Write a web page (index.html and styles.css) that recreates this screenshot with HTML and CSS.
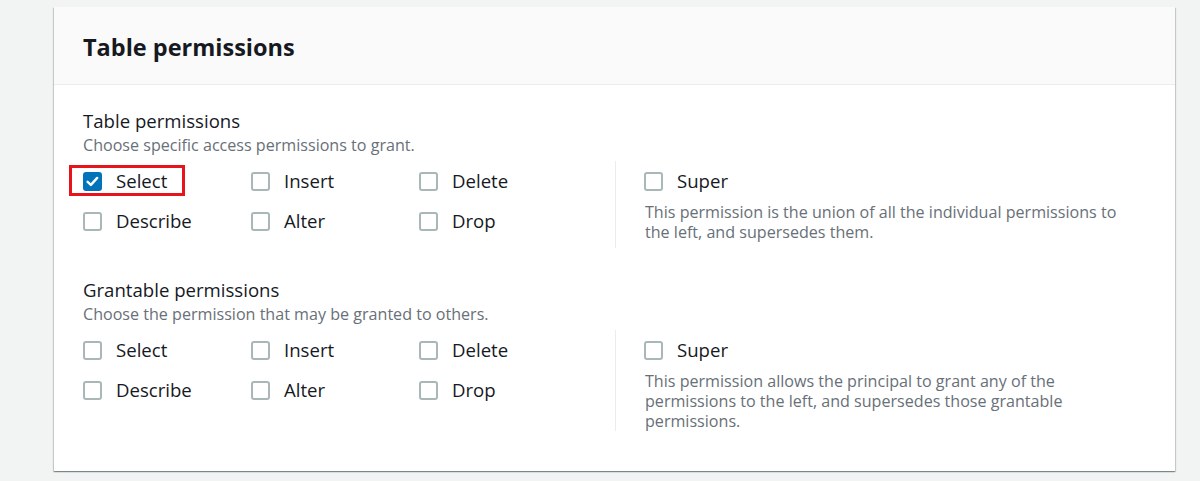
FILE: index.html
```html
<!DOCTYPE html>
<html>
<head>
<meta charset="utf-8">
<link rel="stylesheet" href="styles.css">
</head>
<body>
<div class="page">
  <div class="card">
    <div class="card-header"><h2 class="card-title">Table permissions</h2></div>
    <div class="card-body">
      <div class="section">
        <div class="section-title">Table permissions</div>
        <div class="section-desc">Choose specific access permissions to grant.</div>
        <div class="perm-row">
          <div class="perm-grid">
            <label class="cb-item highlight"><span class="cb checked"><svg viewBox="0 0 19 19" width="19" height="19"><path d="M4.6 9.8 L7.9 12.9 L14.2 5.9" fill="none" stroke="#fff" stroke-width="2.4" stroke-linecap="round" stroke-linejoin="round"/></svg></span><span class="cb-label">Select</span></label>
            <label class="cb-item"><span class="cb"></span><span class="cb-label">Insert</span></label>
            <label class="cb-item"><span class="cb"></span><span class="cb-label">Delete</span></label>
            <label class="cb-item"><span class="cb"></span><span class="cb-label">Describe</span></label>
            <label class="cb-item"><span class="cb"></span><span class="cb-label">Alter</span></label>
            <label class="cb-item"><span class="cb"></span><span class="cb-label">Drop</span></label>
          </div>
          <div class="super-col">
            <label class="cb-item"><span class="cb"></span><span class="cb-label">Super</span></label>
            <p class="super-desc">This permission is the union of all the individual permissions to the left, and supersedes them.</p>
          </div>
        </div>
      </div>
      <div class="section">
        <div class="section-title">Grantable permissions</div>
        <div class="section-desc">Choose the permission that may be granted to others.</div>
        <div class="perm-row">
          <div class="perm-grid">
            <label class="cb-item"><span class="cb"></span><span class="cb-label">Select</span></label>
            <label class="cb-item"><span class="cb"></span><span class="cb-label">Insert</span></label>
            <label class="cb-item"><span class="cb"></span><span class="cb-label">Delete</span></label>
            <label class="cb-item"><span class="cb"></span><span class="cb-label">Describe</span></label>
            <label class="cb-item"><span class="cb"></span><span class="cb-label">Alter</span></label>
            <label class="cb-item"><span class="cb"></span><span class="cb-label">Drop</span></label>
          </div>
          <div class="super-col">
            <label class="cb-item"><span class="cb"></span><span class="cb-label">Super</span></label>
            <p class="super-desc">This permission allows the principal to grant any of the<br>permissions to the left, and supersedes those grantable<br>permissions.</p>
          </div>
        </div>
      </div>
    </div>
  </div>
</div>
</body>
</html>
```
FILE: styles.css
```css
html, body {
  margin: 0;
  padding: 0;
  background: #f2f3f3;
  font-family: "Open Sans", "Noto Sans", sans-serif;
  color: #16191f;
}
.page {
  padding: 7px 25px 10px 54px;
}
.card {
  background: #fff;
  box-shadow: 0 1px 1px 0 rgba(0, 28, 36, 0.3), 1px 1px 1px 0 rgba(0, 28, 36, 0.15), -1px 1px 1px 0 rgba(0, 28, 36, 0.15);
  height: 464px;
  box-sizing: border-box;
}
.card-header {
  background: #fafafa;
  border-bottom: 1px solid #eaeded;
  height: 78px;
  box-sizing: border-box;
  padding: 0 29px;
  display: flex;
  align-items: center;
}
.card-title {
  margin: 0;
  font-size: 23.5px;
  font-weight: 700;
  line-height: 28px;
  padding-top: 2px;
}
.card-body {
  padding: 23px 29px 0 29px;
}
.section + .section {
  margin-top: 29px;
}
.section-title {
  font-size: 18.6px;
  line-height: 26px;
}
.section-desc {
  font-size: 16.1px;
  line-height: 22px;
  color: #687078;
}
.perm-row {
  display: flex;
  margin-top: 5px;
  min-height: 87px;
}
.perm-grid {
  display: grid;
  grid-template-columns: 168px 168px 168px;
  grid-auto-rows: 40px;
  align-content: start;
  width: 532px;
  border-right: 1px solid #eaeded;
}
.cb-item {
  display: flex;
  align-items: center;
  gap: 14px;
  position: relative;
  height: 40px;
}
.cb {
  width: 19px;
  height: 19px;
  box-sizing: border-box;
  border: 2px solid #aab7b8;
  border-radius: 3px;
  flex: none;
  display: flex;
  align-items: center;
  justify-content: center;
}
.cb.checked {
  background: #0073bb;
  border-color: #0073bb;
}
.cb.checked svg {
  margin: -2px;
}
.cb-label {
  font-size: 18.6px;
  line-height: 22px;
  color: #16191f;
}
.highlight::after {
  content: "";
  position: absolute;
  left: -14px;
  top: 4px;
  width: 116px;
  height: 31px;
  box-sizing: border-box;
  border: 3px solid #e8141c;
}
.super-col {
  padding-left: 28px;
  width: 500px;
}
.super-desc {
  margin: 0;
  margin-top: 1px;
  padding-left: 1px;
  max-width: 495px;
  font-size: 16.1px;
  line-height: 20px;
  color: #687078;
}
```
